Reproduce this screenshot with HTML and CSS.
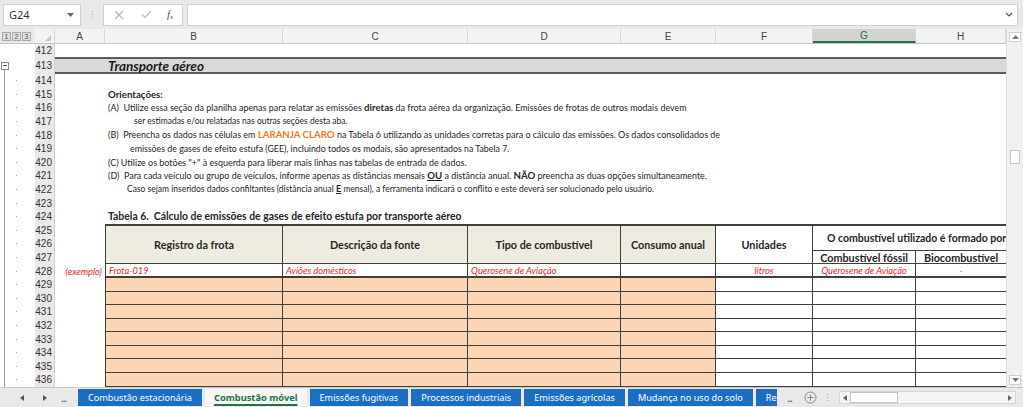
FILE: index.html
```html
<!DOCTYPE html>
<html lang="pt">
<head>
<meta charset="utf-8">
<title>Transporte aéreo</title>
<link rel="stylesheet" href="styles.css">
</head>
<body>
<div class="app">
  <div class="fbar">
    <div class="namebox"><span class="nb-text">G24</span><svg class="nb-caret" width="7" height="4" viewBox="0 0 7 4"><path d="M0 0h7L3.5 4z" fill="#666"/></svg></div>
    <div class="fsep"><i></i><i></i><i></i></div>
    <div class="fbtns">
      <svg class="fb-x" width="10" height="10" viewBox="0 0 10 10"><path d="M1 1l8 8M9 1l-8 8" stroke="#b8b8b8" stroke-width="1.2"/></svg>
      <svg class="fb-ok" width="11" height="9" viewBox="0 0 11 9"><path d="M1 4.5l3 3 6-6.5" stroke="#b8b8b8" stroke-width="1.2" fill="none"/></svg>
      <span class="fx">f<sub>x</sub></span>
    </div>
    <div class="finput"><svg width="8" height="5" viewBox="0 0 8 5"><path d="M1 1l3 3 3-3" stroke="#555" stroke-width="1.2" fill="none"/></svg></div>
  </div>

  <div class="main">
    <div class="sheet">
      <div class="colhead">
        <div class="levels"><span>1</span><span>2</span><span>3</span></div>
        <div class="corner"><svg width="6" height="6" viewBox="0 0 6 6"><path d="M6 0v6H0z" fill="#c8c8c8"/></svg></div>
        <div class="ch">A</div>
        <div class="ch">B</div>
        <div class="ch">C</div>
        <div class="ch">D</div>
        <div class="ch">E</div>
        <div class="ch">F</div>
        <div class="ch sel">G</div>
        <div class="ch">H</div>
      </div>

      <div class="grid">
        <div class="g"></div><div class="rh">412</div><div class="c s8"></div>
        <div class="g minus"><span class="mbox"></span></div><div class="rh">413</div><div class="band s8">Transporte aéreo</div>
        <div class="g dot"></div><div class="rh">414</div><div class="c s8"></div>
        <div class="g dot"></div><div class="rh">415</div><div class="c"></div><div class="t s7"><b>Orientações:</b></div>
        <div class="g dot"></div><div class="rh">416</div><div class="c"></div><div class="t s7">(A)&nbsp; Utilize essa seção da planilha apenas para relatar as emissões <b>diretas</b> da frota aérea da organização. Emissões de frotas de outros modais devem</div>
        <div class="g dot"></div><div class="rh">417</div><div class="c"></div><div class="t s7 ind1">ser estimadas e/ou relatadas nas outras seções desta aba.</div>
        <div class="g dot"></div><div class="rh">418</div><div class="c"></div><div class="t s7">(B)&nbsp; Preencha os dados nas células em <b class="orange">LARANJA CLARO</b> na Tabela 6 utilizando as unidades corretas para o cálculo das emissões. Os dados consolidados de</div>
        <div class="g dot"></div><div class="rh">419</div><div class="c"></div><div class="t s7 ind2">emissões de gases de efeito estufa (GEE), incluindo todos os modais, são apresentados na Tabela 7.</div>
        <div class="g dot"></div><div class="rh">420</div><div class="c"></div><div class="t s7">(C) Utilize os botões "+" à esquerda para liberar mais linhas nas tabelas de entrada de dados.</div>
        <div class="g dot"></div><div class="rh">421</div><div class="c"></div><div class="t s7">(D)&nbsp; Para cada veículo ou grupo de veículos, informe apenas as distâncias mensais <b><u>OU</u></b> a distância anual. <b>NÃO</b> preencha as duas opções simultaneamente.</div>
        <div class="g dot"></div><div class="rh">422</div><div class="c"></div><div class="t s7 ind3">Caso sejam inseridos dados confiltantes (distância anual <b><u>E</u></b> mensal), a ferramenta indicará o conflito e este deverá ser solucionado pelo usuário.</div>
        <div class="g dot"></div><div class="rh">423</div><div class="c s8"></div>
        <div class="g dot"></div><div class="rh">424</div><div class="c"></div><div class="t s7 cap"><b>Tabela 6.&nbsp; Cálculo de emissões de gases de efeito estufa por transporte aéreo</b></div>
        <div class="g dot"></div><div class="rh">425</div><div class="c"></div>
        <div class="th r3 bl">Registro da frota</div>
        <div class="th r3">Descrição da fonte</div>
        <div class="th r3">Tipo de combustível</div>
        <div class="th r3">Consumo anual</div>
        <div class="th r3 w">Unidades</div>
        <div class="th r2 w s2 over"><span>O combustível utilizado é formado por</span></div>
        <div class="g dot"></div><div class="rh">426</div><div class="c"></div>
        <div class="g dot"></div><div class="rh">427</div><div class="c"></div>
        <div class="th w sub">Combustível fóssil</div>
        <div class="th w sub nr">Biocombustível</div>
        <div class="g dot"></div><div class="rh">428</div>
        <div class="ex exa">(exemplo)</div>
        <div class="td ex fr bl">Frota-019</div>
        <div class="td ex fr">Aviões domésticos</div>
        <div class="td ex fr">Querosene de Aviação</div>
        <div class="td fr"></div>
        <div class="td ex fr ctr">litros</div>
        <div class="td ex fr ctr">Querosene de Aviação</div>
        <div class="td ex fr ctr nr">-</div>
        <div class="g dot"></div><div class="rh">429</div><div class="c"></div><div class="td o bl"></div><div class="td o"></div><div class="td o"></div><div class="td o"></div><div class="td"></div><div class="td"></div><div class="td nr"></div>
        <div class="g dot"></div><div class="rh">430</div><div class="c"></div><div class="td o bl"></div><div class="td o"></div><div class="td o"></div><div class="td o"></div><div class="td"></div><div class="td"></div><div class="td nr"></div>
        <div class="g dot"></div><div class="rh">431</div><div class="c"></div><div class="td o bl"></div><div class="td o"></div><div class="td o"></div><div class="td o"></div><div class="td"></div><div class="td"></div><div class="td nr"></div>
        <div class="g dot"></div><div class="rh">432</div><div class="c"></div><div class="td o bl"></div><div class="td o"></div><div class="td o"></div><div class="td o"></div><div class="td"></div><div class="td"></div><div class="td nr"></div>
        <div class="g dot"></div><div class="rh">433</div><div class="c"></div><div class="td o bl"></div><div class="td o"></div><div class="td o"></div><div class="td o"></div><div class="td"></div><div class="td"></div><div class="td nr"></div>
        <div class="g dot"></div><div class="rh">434</div><div class="c"></div><div class="td o bl"></div><div class="td o"></div><div class="td o"></div><div class="td o"></div><div class="td"></div><div class="td"></div><div class="td nr"></div>
        <div class="g dot"></div><div class="rh">435</div><div class="c"></div><div class="td o bl"></div><div class="td o"></div><div class="td o"></div><div class="td o"></div><div class="td"></div><div class="td"></div><div class="td nr"></div>
        <div class="g dot"></div><div class="rh">436</div><div class="c"></div><div class="td o bl"></div><div class="td o"></div><div class="td o"></div><div class="td o"></div><div class="td"></div><div class="td"></div><div class="td nr"></div>
      </div>
    </div>

    <div class="vscroll">
      <div class="vbtn"><svg width="7" height="4" viewBox="0 0 7 4"><path d="M0 4h7L3.5 0z" fill="#777"/></svg></div>
      <div class="vtrack"><div class="vthumb"></div></div>
      <div class="vbtn"><svg width="7" height="4" viewBox="0 0 7 4"><path d="M0 0h7L3.5 4z" fill="#777"/></svg></div>
    </div>
  </div>

  <div class="tabbar">
    <div class="tnav">
      <svg width="4" height="6" viewBox="0 0 4 6"><path d="M4 0v6L0 3z" fill="#555"/></svg>
      <svg width="4" height="6" viewBox="0 0 4 6"><path d="M0 0v6l4-3z" fill="#555"/></svg>
      <span class="tdots">...</span>
    </div>
    <div class="tabs">
      <div class="tab">Combustão estacionária</div>
      <div class="tab act">Combustão móvel</div>
      <div class="tab">Emissões fugitivas</div>
      <div class="tab">Processos industriais</div>
      <div class="tab">Emissões agrícolas</div>
      <div class="tab">Mudança no uso do solo</div>
      <div class="tab cut">Re</div>
    </div>
    <span class="tdots more">...</span>
    <svg class="addsheet" width="13" height="13" viewBox="0 0 13 13"><circle cx="6.5" cy="6.5" r="5.5" fill="none" stroke="#888" stroke-width="1"/><path d="M6.5 3.5v6M3.5 6.5h6" stroke="#888" stroke-width="1"/></svg>
    <div class="hsep"><i></i><i></i><i></i></div>
    <div class="hscroll">
      <div class="hbtn"><svg width="4" height="6" viewBox="0 0 4 6"><path d="M4 0v6L0 3z" fill="#666"/></svg></div>
      <div class="hthumb"></div>
      <div class="htrack"></div>
      <div class="hbtn"><svg width="4" height="6" viewBox="0 0 4 6"><path d="M0 0v6l4-3z" fill="#666"/></svg></div>
    </div>
  </div>
</div>
</body>
</html>
```

FILE: styles.css
```css
* { box-sizing: border-box; margin: 0; padding: 0; }
html, body { width: 1023px; height: 407px; overflow: hidden; background: #fff; }
body { font-family: "Liberation Sans", Arial, sans-serif; color: #262626; }

.app { width: 1023px; height: 407px; display: flex; flex-direction: column; }

/* formula bar */
.fbar { height: 29px; flex: none; background: #e9e9e9; display: flex; align-items: center; padding: 0 5px 0 3px; }
.namebox { width: 78px; height: 22px; background: #fff; border: 1px solid #d0d0d0; display: flex; align-items: center; justify-content: space-between; padding: 0 6px 0 5px; font: 11px "Noto Sans", sans-serif; color: #333; }
.fsep { width: 22px; display: flex; flex-direction: column; align-items: center; gap: 2px; }
.fsep i { width: 1px; height: 1px; background: #a8a8a8; display: block; }
.fbtns { width: 80px; height: 22px; background: #fff; border: 1px solid #d0d0d0; display: flex; align-items: center; padding-left: 10px; }
.fb-ok { margin-left: 17px; }
.fx { margin-left: 15px; font: italic 11px "Liberation Serif", serif; color: #555; }
.fx sub { font-size: 7px; vertical-align: -1px; }
.finput { flex: 1; margin-left: 4px; height: 22px; background: #fff; border: 1px solid #d0d0d0; display: flex; align-items: center; justify-content: flex-end; padding-right: 4px; }

/* main area */
.main { height: 358px; flex: none; display: flex; }
.sheet { width: 1006px; overflow: hidden; display: flex; flex-direction: column; }
.vscroll { width: 17px; background: #f0f0f0; border-left: 1px solid #dcdcdc; display: flex; flex-direction: column; align-items: center; padding: 3px 0 2px; }
.vbtn { width: 12px; height: 10px; background: #fff; border: 1px solid #cfcfcf; display: flex; align-items: center; justify-content: center; }
.vtrack { flex: 1; width: 100%; display: flex; flex-direction: column; align-items: center; }
.vthumb { width: 10px; height: 14px; margin-top: 108px; background: #fff; border: 1px solid #c4c4c4; }

:root { --cols: 35px 20px 50px 178px 185px 153px 95px 97px 103px 90px; }

.colhead { height: 15px; flex: none; display: grid; grid-template-columns: var(--cols); background: #f3f3f3; border-bottom: 1px solid #c6c6c6; font-size: 10px; color: #444; }
.levels { display: flex; align-items: center; gap: 1px; padding-left: 2px; background: #e9e9e9; }
.levels span { width: 9px; height: 9px; border: 1px solid #aaa; background: #dedede; font-size: 7px; line-height: 7px; text-align: center; color: #555; }
.corner { display: flex; align-items: flex-end; justify-content: flex-end; padding: 0 3px 2px 0; border-right: 1px solid #d5d5d5; }
.ch { display: flex; align-items: center; justify-content: center; border-right: 1px solid #d8d8d8; }
.ch.sel { background: #d3d3d3; border-bottom: 2px solid #217346; color: #217346; }

.grid { display: grid; grid-template-columns: var(--cols); grid-template-rows: 13px 17px repeat(23, 13.6px); }
.s8 { grid-column: span 8; }
.s7 { grid-column: span 7; }
.s2 { grid-column: span 2; }
.r3 { grid-row: span 3; }
.r2 { grid-row: span 2; }

.g { background: #fff; }
.g.dot { background: linear-gradient(#9a9a9a, #9a9a9a) 4px 0 / 1px 100% no-repeat, linear-gradient(#a0a0a0, #a0a0a0) 16px 50% / 1px 1px no-repeat, #fff; }
.g.minus { display: flex; align-items: center; padding-left: 1px; background: linear-gradient(#9a9a9a, #9a9a9a) 4px 12px / 1px 5px no-repeat, #fff; }
.mbox { width: 8px; height: 8px; border: 1px solid #8a8a8a; background: linear-gradient(#555, #555) 1px 50% / 4px 1px no-repeat, #fff; }
.rh { background: #e9e9e9; font-size: 10px; color: #333; display: flex; align-items: center; justify-content: flex-end; padding-right: 2px; border-right: 1px solid #cfcfcf; }

.c { background: #fff; }
.band { background: #d9d9d9; border-top: 2px solid #5c5c5c; border-bottom: 2px solid #5c5c5c; font: italic bold 13.5px "Lato", sans-serif; color: #1a1a1a; display: flex; align-items: center; padding-left: 53px; }
.t { display: block; font: 8.96px/13.6px "Lato", sans-serif; color: #262626; white-space: nowrap; padding-left: 3px; overflow: visible; }
.t b { font-weight: bold; font-size: 1.08em; line-height: 1; }
.t.ind1 { padding-left: 29px; font-size: 8.5px; }
.t.ind2 { padding-left: 25px; font-size: 8.8px; }
.t.ind3 { padding-left: 22px; font-size: 8.5px; }
.t.cap { font-size: 9.65px; }
.orange { color: #f07a22; }

.th { background: #eeece1; font: bold 10.8px "Lato", sans-serif; color: #262626; display: flex; align-items: center; justify-content: center; border-top: 2px solid #3f3f3f; border-right: 1px solid #3f3f3f; border-bottom: 1px solid #3f3f3f; white-space: nowrap; }
.th.w { background: #fff; }
.th.sub { border-top: none; }
.th.over { justify-content: flex-start; padding-left: 14px; overflow: hidden; border-right: none; font-size: 10.5px; }
.bl { border-left: 1px solid #3f3f3f; }
.nr { border-right: none !important; }

.td { border-right: 1px solid #3f3f3f; border-bottom: 1px solid #3f3f3f; font: italic 9.3px "Lato", sans-serif; display: flex; align-items: center; padding-left: 3px; white-space: nowrap; overflow: hidden; }
.td.fr { border-bottom-width: 2px; }
.td.o { background: #fcd5b4; }
.ex { color: #e8232b; }
.ctr { justify-content: center; padding-left: 0; }
.exa { font: italic 9.3px "Lato", sans-serif; display: flex; align-items: center; justify-content: flex-end; padding-right: 3px; }

/* tab bar */
.tabbar { height: 20px; flex: none; background: #e9e9e9; border-top: 1px solid #c8c8c8; display: flex; align-items: center; }
.tnav { width: 78px; display: flex; align-items: center; padding-left: 20px; }
.tnav svg + svg { margin-left: 19px; }
.tdots { font: 10px "Noto Sans", sans-serif; color: #555; margin-left: 14px; letter-spacing: -1px; }
.tabs { display: flex; height: 100%; align-items: stretch; gap: 3px; padding: 1px 0 1px; width: 705px; overflow: hidden; }
.tab { background: #1a6fc4; color: #fff; font: 9.15px "Noto Sans", sans-serif; display: flex; align-items: center; padding: 0 10px; white-space: nowrap; }
.tab.act { background: #f7f7f7; color: #217346; font-weight: bold; font-size: 9.3px; padding: 0 9px; text-decoration: underline; text-decoration-color: #217346; text-underline-offset: 3px; text-decoration-thickness: 2px; }
.tab.cut { padding-right: 0; }
.tdots.more { margin-left: 4px; }
.addsheet { margin-left: 12px; }
.hsep { display: flex; flex-direction: column; gap: 2px; margin-left: 10px; }
.hsep i { width: 1px; height: 1px; background: #aaa; display: block; }
.hscroll { margin-left: 11px; width: 177px; height: 13px; display: flex; align-items: center; background: #f4f4f4; border: 1px solid #d6d6d6; }
.hbtn { width: 10px; height: 100%; display: flex; align-items: center; justify-content: center; }
.hthumb { width: 48px; height: 100%; background: #fff; border: 1px solid #c4c4c4; }
.htrack { flex: 1; }
```
